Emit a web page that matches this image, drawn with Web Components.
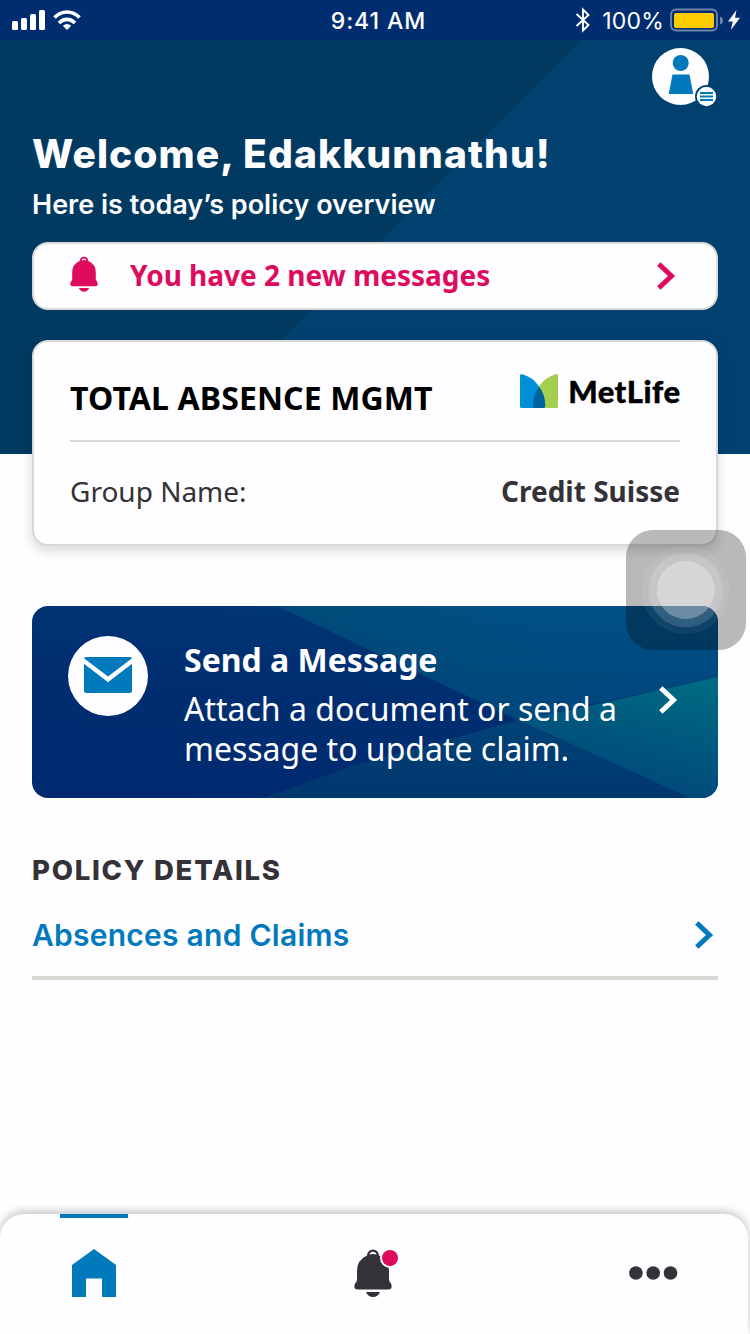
<!DOCTYPE html>
<html lang="en">
<head>
<meta charset="utf-8">
<title>Policy overview</title>
<style>
html, body { margin: 0; padding: 0; background: #fefdff; }
body { width: 750px; height: 1334px; overflow: hidden; }
</style>
</head>
<body>
<app-screen></app-screen>
<script>
function define(name, html) {
  customElements.define(name, class extends HTMLElement {
    constructor() {
      super();
      const t = document.createElement('template');
      t.innerHTML = html;
      this.attachShadow({ mode: 'open' }).appendChild(t.content.cloneNode(true));
    }
  });
}

define('status-bar', `
<style>
:host { display: grid; grid-template-columns: 1fr auto 1fr; grid-template-rows: 40px; align-items: center; height: 40px; background: #002d70; color: #fff; font: 400 23px/38px Inter, sans-serif; }
svg { display: block; }
.left { display: flex; padding-left: 12px; gap: 8px; align-items: center; }
.right { display: flex; justify-content: flex-end; align-items: center; padding-right: 10px; }
.time { letter-spacing: .95px; padding: 2px 0 0 7px; font-weight: 500; }
.pct { margin: 0 6px 0 11px; padding-top: 2px; letter-spacing: .2px; }
</style>
<div class="left">
  <svg width="33" height="20" fill="#fff"><rect y="11" width="6" height="9" rx="1.500"/><rect x="9" y="8" width="6" height="12" rx="1.500"/><rect x="18" y="4" width="6" height="16" rx="1.500"/><rect x="27" width="6" height="20" rx="1.500"/></svg>
  <svg width="28" height="20" fill="none" stroke="#fff" stroke-width="3.700"><path d="M1.500 7.500Q7 2 14 2t12.500 5.500M6 13Q9.500 9.300 14 9.300T22 13"/><path d="M9.800 15.700Q14 12.400 18.200 15.700L14 20Z" fill="#fff" stroke="none"/></svg>
</div>
<div class="time">9:41 AM</div>
<div class="right">
  <svg width="16" height="26" fill="none" stroke="#fff" stroke-width="1.900"><path d="M1.500 7L13.500 18 8 23.500V2.500L13.500 8 1.500 19"/></svg>
  <span class="pct">100%</span>
  <svg width="53" height="24"><rect x="1" y="1.500" width="46" height="21" rx="5" fill="none" stroke="#7085aa" stroke-width="1.800"/><rect x="4" y="5" width="40" height="15" rx="2" fill="#fc0"/><path d="M50 8.500Q53 9.500 53 12.500T50 16.500Z" fill="#7085aa"/></svg>
  <svg style="margin-left:5px" width="12" height="20" fill="#fff"><path d="M8.500 0L0 11.500H4.800L2.800 20 12 7.800H7Z"/></svg>
</div>`);

define('profile-avatar', `
<style>:host { display: block; width: 66px; height: 62px; } svg { display: block; }</style>
<svg width="66" height="62"><circle cx="28.500" cy="28.500" r="28.500" fill="#fefdff"/><circle cx="28.700" cy="15" r="8" fill="#007abc"/><path d="M20.500 26.500H37.500L41.200 46H16.700Z" fill="#007abc"/><circle cx="54.500" cy="48.500" r="11.500" fill="#004170"/><circle cx="54.500" cy="48.500" r="9.700" fill="#fefdff"/><path d="M48 45H61M48 48.500H61M48 52H61" stroke="#007abc" stroke-width="1.900"/></svg>`);

define('chevron-icon', `
<style>:host { display: block; width: 20px; height: 28px; } svg { display: block; }</style>
<svg width="20" height="28" fill="none" stroke="currentColor" stroke-width="5"><path d="M2.800 2L15.500 14 2.800 26"/></svg>`);

define('bell-icon', `
<style>:host { display: block; width: 28px; height: 36px; } svg { display: block; width: 100%; height: 100%; overflow: visible; }</style>
<svg viewBox="0 0 38 48" fill="currentColor"><path fill-rule="evenodd" d="M13 6.500A6 6 0 0 1 25 6.500Q35 11 35 22V31Q35.500 33 37 34.500Q39 40.500 34.500 40.500H3.500Q-1 40.500 1 34.500Q2.800 33 3 31V22Q3 11 13 6.500ZM15.500 5.600Q19 4.200 22.500 5.600A3.600 3.600 0 0 0 15.500 5.600Z"/><path d="M12 43H26Q24 48 19 48T12 43Z"/></svg>`);

define('message-alert', `
<style>
:host { box-sizing: border-box; display: flex; align-items: center; height: 68px; padding: 0 40px 0 36px; border: 2px solid #dadada; border-radius: 16px; background: #fefdff; color: #de0a5d; }
.t { flex: 1; margin: 0 0 2px 32px; font: 700 28px/40px "Noto Sans", sans-serif; white-space: nowrap; }
bell-icon { margin-bottom: 4px; }
</style>
<bell-icon></bell-icon><span class="t"><slot></slot></span><chevron-icon></chevron-icon>`);

define('metlife-logo', `
<style>
:host { display: flex; align-items: center; gap: 10px; height: 34px; color: #000; }
svg { display: block; } span { font: 900 31px/34px Lato, sans-serif; letter-spacing: .5px; margin-right: -.5px; white-space: nowrap; -webkit-text-stroke: .4px #000; }
</style>
<svg width="38" height="34"><path d="M1.500 0Q13 3 19 12.500 25 20 25 34H1.500Q0 34 0 32.500V1.500Q0 0 1.500 0Z" fill="#0090da"/><path d="M36.500 0Q25 3 19 12.500 14 19 13 34H36.500Q38 34 38 32.500V1.500Q38 0 36.500 0Z" fill="#a4ce4e"/><path d="M19 12.500Q12.500 21 13 32.500 13 34 14.500 34H23.500Q25.500 34 25.200 31 25 20 19 12.500Z" fill="#0061a0"/></svg>
<span>MetLife</span>`);

define('policy-card', `
<style>
:host { box-sizing: border-box; display: block; height: 206px; padding: 0 36px; border: 2px solid #d8d7d9; border-radius: 16px; background: #fefdff; box-shadow: 0 5px 12px rgba(0,0,0,.15); font-family: "Noto Sans", sans-serif; }
.head { display: flex; justify-content: space-between; height: 98px; border-bottom: 2px solid #d8d7da; }
h2 { margin: 34px 0 0; font: 700 32px/44px "Noto Sans", sans-serif; letter-spacing: .12px; color: #000; white-space: nowrap; }
metlife-logo { margin-top: 32px; }
.row { display: flex; justify-content: space-between; align-items: center; height: 40px; margin-top: 29px; font-size: 28px; line-height: 40px; color: #343236; white-space: nowrap; }
b { font-weight: 700; }
</style>
<div class="head"><h2>TOTAL ABSENCE MGMT</h2><metlife-logo></metlife-logo></div>
<div class="row"><span>Group Name:</span><b>Credit Suisse</b></div>`);

define('send-card', `
<style>
:host { display: grid; height: 192px; border-radius: 16px; overflow: hidden; }
.bg, .c { grid-area: 1 / 1; }
.bg { display: block; }
.c { position: relative; display: flex; color: #fff; font-family: "Noto Sans", sans-serif; padding: 30px 40px 0 36px; }
.mail { flex: none; display: block; }
.txt { flex: 1; margin-left: 36px; }
h3 { margin: 2px 0 7px; font: 700 32px/44px "Noto Sans", sans-serif; white-space: nowrap; }
p { margin: 0; font-size: 32px; line-height: 40px; white-space: nowrap; }
p span { display: block; width: max-content; }
chevron-icon { margin-top: 50px; }
</style>
<svg class="bg" width="686" height="192">
  <defs>
    <linearGradient id="a" x1=".6" y1="0" x2=".3" y2="1"><stop offset="0" stop-color="#003676"/><stop offset=".5" stop-color="#002d70"/><stop offset="1" stop-color="#002a70"/></linearGradient>
    <linearGradient id="b" x1="0" y1="0" x2="1" y2="0"><stop offset="0" stop-color="#004b78"/><stop offset=".5" stop-color="#005083"/><stop offset="1" stop-color="#005086"/></linearGradient>
    <linearGradient id="c" x1="1" y1="0" x2=".6" y2="1"><stop offset="0" stop-color="#006d83"/><stop offset="1" stop-color="#00467a"/></linearGradient>
    <linearGradient id="d" x1=".5" y1="0" x2=".4" y2="1"><stop offset="0" stop-color="#004278"/><stop offset="1" stop-color="#00376e"/></linearGradient>
    <linearGradient id="s" x1="0" y1="0" x2="0" y2="1"><stop offset="0" stop-color="#003a70" stop-opacity="0"/><stop offset="1" stop-color="#003a70" stop-opacity=".45"/></linearGradient>
  </defs>
  <rect width="686" height="192" fill="url(#a)"/>
  <path d="M245 0H686V71L486 114Z" fill="url(#b)"/>
  <path d="M245 0H686V71L486 114Z" fill="url(#s)"/>
  <path d="M686 71L543 103 486 114 658 192H686Z" fill="url(#c)"/>
  <path d="M486 114L426 131 318 161 231 192H658Z" fill="url(#d)"/>
</svg>
<div class="c">
  <svg class="mail" width="80" height="80"><circle cx="40" cy="40" r="40" fill="#fefdff"/><path d="M19 21H61Q64 21 64 22.200L40 40.500 16 22.200Q16 21 19 21ZM16 27.700L40 46.300 64 27.700V54.500Q64 57 61.500 57H18.500Q16 57 16 54.500Z" fill="#007abc"/></svg>
  <div class="txt"><h3>Send a Message</h3><p><span>Attach a document or send a</span><span>message to update claim.</span></p></div>
  <chevron-icon></chevron-icon>
</div>`);

define('policy-details', `
<style>
:host { display: block; }
h2 { margin: 0; font: 800 27.5px/40px Inter, sans-serif; letter-spacing: 1.75px; color: #343236; width: max-content; }
.row { display: flex; justify-content: space-between; align-items: center; height: 83px; padding: 3px 4px 0 0; border-bottom: 4px solid #d9d9d6; color: #007abc; font: 600 30px/40px Inter, sans-serif; letter-spacing: .25px; }
</style>
<h2>POLICY DETAILS</h2><div class="row"><span>Absences and Claims</span><chevron-icon></chevron-icon></div>`);

define('tab-bar', `
<style>
:host { box-sizing: border-box; display: grid; grid-template-columns: 60px 68px 1fr auto 1fr auto; height: 120px; margin-right: 2px; background: #fefdff; border-radius: 24px 24px 0 0; box-shadow: 0 -3px 9px rgba(0,0,0,.22); color: #343236; }
.home { grid-column: 2; border-top: 4px solid #007abc; padding: 31px 0 0 12px; }
svg { display: block; }
.bell { grid-column: 4; display: grid; margin: 35px 5px 0 0; width: 44px; height: 48px; }
.bell > * { grid-area: 1 / 1; }
bell-icon { width: 38px; height: 48px; }
.dot { position: relative; margin-left: 26px; margin-top: -2px; }
.more { grid-column: 6; margin: 52px 70px 0 0; }
</style>
<div class="home"><svg width="44" height="48"><path d="M22 0L44 16V48H30V29.500H14V48H0V16Z" fill="#007abc"/></svg></div>
<div class="bell"><bell-icon></bell-icon><svg class="dot" width="22" height="22"><circle cx="10" cy="11" r="10" fill="#fefdff"/><circle cx="10" cy="11" r="8" fill="#de0a5d"/></svg></div>
<svg class="more" width="49" height="14" fill="currentColor"><circle cx="6.900" cy="7" r="6.800"/><circle cx="24.200" cy="7" r="6.800"/><circle cx="41.500" cy="7" r="6.800"/></svg>`);

define('assistive-touch', `
<style>:host { display: block; position: absolute; left: 626px; top: 530px; width: 120px; height: 120px; } svg { display: block; }</style>
<svg width="120" height="120"><rect width="120" height="120" rx="27" fill="#000" fill-opacity=".27"/><g fill="#fff"><circle cx="59.700" cy="60" r="44" fill-opacity=".06"/><circle cx="59.700" cy="60" r="37.300" fill-opacity=".14"/><circle cx="59.700" cy="60" r="29" fill-opacity=".29"/></g></svg>`);

define('app-screen', `
<style>
:host { position: relative; display: flex; flex-direction: column; width: 750px; height: 1334px; overflow: hidden; background: linear-gradient(135deg, #003a60 51.600%, #004170 51.660%) 0 0 / 750px 454px no-repeat #fefdff; font-family: Inter, sans-serif; }
.avatar { display: flex; justify-content: flex-end; padding: 8px 32px 0 0; }
main { flex: 1; padding: 0 32px; }
h1 { margin: 19px 0 0; height: 51px; color: #fefdff; font: 800 39px/50px Inter, sans-serif; letter-spacing: 1.08px; white-space: nowrap; width: max-content; }
.sub { margin: 6px 0 18px; height: 38px; color: #fefdff; font: 600 27px/38px Inter, sans-serif; white-space: nowrap; width: max-content; }
policy-card { margin-top: 30px; }
send-card { margin-top: 60px; }
policy-details { margin-top: 52px; }
</style>
<status-bar></status-bar>
<div class="avatar"><profile-avatar></profile-avatar></div>
<main>
  <h1>Welcome, Edakkunnathu!</h1>
  <p class="sub">Here is today’s policy overview</p>
  <message-alert>You have 2 new messages</message-alert>
  <policy-card></policy-card>
  <send-card></send-card>
  <policy-details></policy-details>
</main>
<tab-bar></tab-bar>
<assistive-touch></assistive-touch>`);
</script>
</body>
</html>
